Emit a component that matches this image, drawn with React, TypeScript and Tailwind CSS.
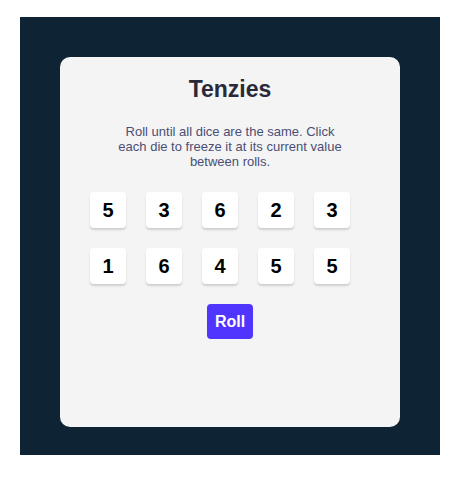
import React from "react";

const dice = [5, 3, 6, 2, 3, 1, 6, 4, 5, 5];

export default function App() {
  return (
    <div className="min-h-[477px] bg-white pt-[17px] pl-[20px]" style={{ fontFamily: '"Liberation Sans", Arial, sans-serif' }}>
      <div className="w-[420px] h-[438px] bg-[#0e2434] p-[40px]">
        <main className="w-[340px] h-[370px] bg-[#f4f4f4] rounded-[10px] flex flex-col items-center pt-[18px]">
          <h1 className="text-[23px] leading-[28px] font-bold text-[#2b283a] m-0">Tenzies</h1>
          <p className="mt-[21px] w-[240px] text-center text-[13px] leading-[15px] text-[#4a4e74]">
            Roll until all dice are the same. Click each die to freeze it at its current value between rolls.
          </p>
          <div className="self-start ml-[30px] mt-[23px] grid grid-cols-[repeat(5,36px)] gap-[20px]">
            {dice.map((d, i) => (
              <button
                key={i}
                className="w-[36px] h-[36px] bg-white rounded-[4px] shadow-[0_2px_2px_rgba(0,0,0,0.15)] flex items-center justify-center text-[20px] font-bold text-black"
              >
                {d}
              </button>
            ))}
          </div>
          <button className="mt-[20px] h-[35px] px-[8px] bg-[#5035ff] text-white font-bold text-[16px] rounded-[4px]">
            Roll
          </button>
        </main>
      </div>
    </div>
  );
}
